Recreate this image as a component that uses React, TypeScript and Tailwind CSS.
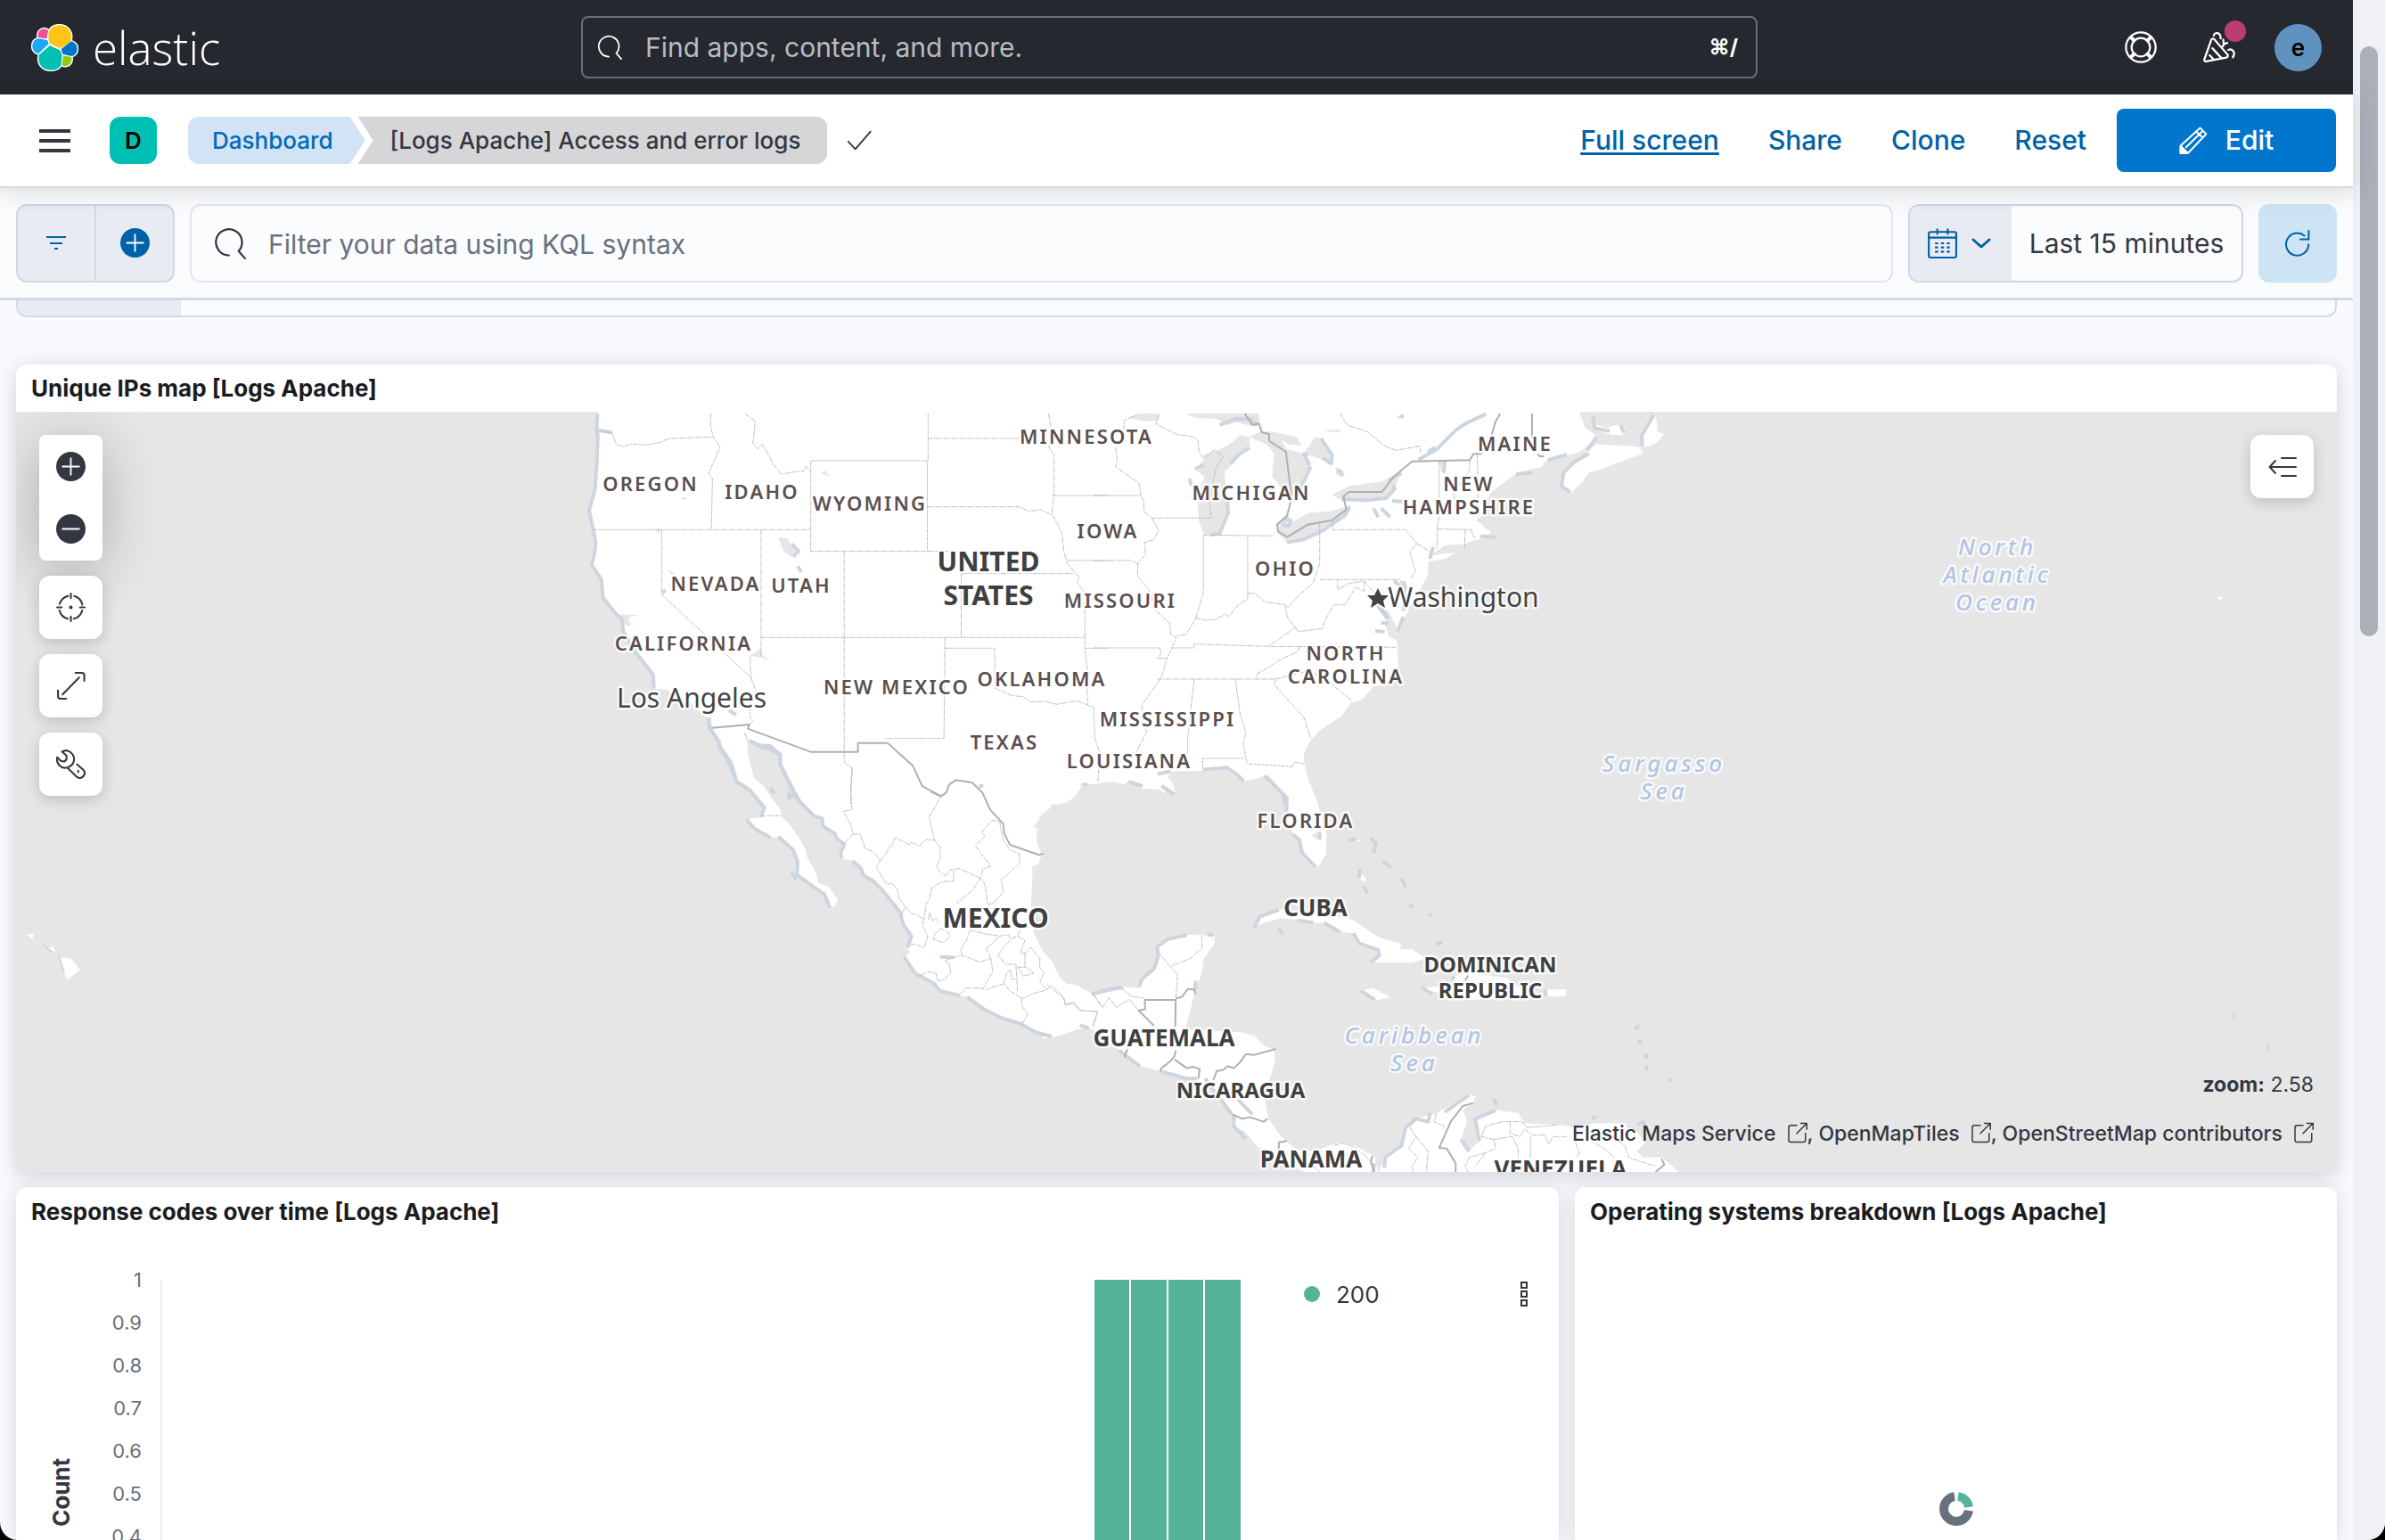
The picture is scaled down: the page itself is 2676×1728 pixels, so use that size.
import React from "react";

type IconProps = { className?: string; children: React.ReactNode; box?: number; width?: number };

function Icon({ className = "size-9", children, box = 16, width = 1 }: IconProps) {
  return (
    <svg
      viewBox={`0 0 ${box} ${box}`}
      className={className}
      fill="none"
      stroke="currentColor"
      strokeWidth={width}
      strokeLinecap="round"
      strokeLinejoin="round"
      aria-hidden="true"
    >
      {children}
    </svg>
  );
}

const SearchIcon = ({ className }: { className: string }) => (
  <Icon className={className}>
    <path d="M7.500 14A6.500 6.500 0 1 1 12.300 11.900L15.500 15.500" />
  </Icon>
);

const PlusCircle = ({ className }: { className: string }) => (
  <Icon className={className}>
    <circle cx="8" cy="8" r="8" fill="currentColor" stroke="none" />
    <path d="M3.500 8h9M8 3.500v9" stroke="#fff" strokeWidth="0.9" />
  </Icon>
);

const MinusCircle = ({ className }: { className: string }) => (
  <Icon className={className}>
    <circle cx="8" cy="8" r="8" fill="currentColor" stroke="none" />
    <path d="M3.500 8h9" stroke="#fff" strokeWidth="0.9" />
  </Icon>
);

const PopoutIcon = () => (
  <Icon className="ml-[5px] inline-block size-6 align-[-3px]">
    <path d="M8 2.500H3.500a1.500 1.500 0 0 0-1.500 1.500v9.500a1.500 1.500 0 0 0 1.500 1.500h9.500a1.500 1.500 0 0 0 1.500-1.500V8.500M11 1h4.500v4.500M15.300 1.200L8 8.500" />
  </Icon>
);

function ElasticLogo() {
  const blobs: [string, string][] = [
    ["#fec514", "M103 85C103 60 120 49 140 49C163 49 180 66 180 90C180 98 178 104 173 109L142 127L107 110C104 102 103 94 103 85Z"],
    ["#f04e98", "M68 85C66 70 78 61 88 61C94 61 100 64 103 68C99 77 98 86 98 92C88 94 76 92 68 90Z"],
    ["#1ba9f5", "M66 94C80 94 92 98 100 100L104 112L70 144C58 144 49 132 49 121C49 107 56 97 66 94Z"],
    ["#00bfb3", "M108 117L143 134L149 150L145 185C136 196 124 200 110 200C88 200 70 184 70 161C70 156 71 152 72 148Z"],
    ["#93c90e", "M153 151C162 153 172 153 181 157C184 173 174 186 160 186C155 186 151 184 148 182Z"],
    ["#0077cc", "M180 103C193 107 200 117 200 128C200 140 193 149 183 153C172 151 160 148 151 146L146 129Z"],
  ];
  return (
    <svg viewBox="45 45 159 159" className="size-[53px]" aria-hidden="true">
      <g fill="#fff" stroke="#fff" strokeWidth="9" strokeLinejoin="round">
        {blobs.map(([c, d]) => <path key={c} d={d} />)}
      </g>
      {blobs.map(([c, d]) => <path key={c} d={d} fill={c} />)}
    </svg>
  );
}

function TopBar() {
  return (
    <header className="flex h-[106px] shrink-0 items-center bg-[#25282f] pr-[35px] pl-[35px] text-white">
      <div className="flex flex-1 items-center gap-4">
        <a href="#home" className="flex items-center gap-4">
          <ElasticLogo />
          <span className="font-['Open_Sans','Noto_Sans',sans-serif] text-[51px] leading-[56px] font-light">elastic</span>
        </a>
      </div>
      <label className="mr-4 flex h-[70px] w-[1320px] items-center rounded-lg border-2 border-[#6b6e75] px-4">
        <SearchIcon className="size-7" />
        <input
          aria-label="Find apps, content, and more."
          placeholder="Find apps, content, and more."
          className="ml-[26px] min-w-0 flex-1 bg-transparent text-[30px] text-white outline-none placeholder:text-[#b9bbc0]"
        />
        <span className="pr-1 text-2xl font-bold">⌘/</span>
      </label>
      <div className="flex flex-1 items-center justify-end gap-11">
        <button aria-label="Help" className="mr-2">
          <Icon className="size-9">
            <circle cx="8" cy="8" r="7.400" />
            <circle cx="8" cy="8" r="4.600" />
            <path d="M3.300 2.700l1.900 1.900M2.700 3.300l1.900 1.900M12.700 2.700l-1.900 1.900M13.300 3.300l-1.900 1.900M3.300 13.300l1.900-1.900M2.700 12.700l1.900-1.900M12.700 13.300l-1.900-1.900M13.300 12.700l-1.900-1.900" />
          </Icon>
        </button>
        <button aria-label="Newsfeed" className="relative">
          <Icon className="size-9">
            <path d="M4.100 4.200L.6 14a.8.8 0 0 0 .9 1.100l10-1.900a1 1 0 0 0 .5-1.700L5.500 4a.9.900 0 0 0-1.400.2zM3.200 12l2.200 2.200M4.600 8.500l4.600 5M5.300 2.200C5.500.3 8.800.4 8.700 3.600M12.600 9.300c2-.9 3.700 1.500 2.200 3.700M10 4.200l.3 2.300 1.700-.7M9.800 7.500l.5-1" />
          </Icon>
          <span className="absolute -top-3 -right-3 size-6 rounded-full bg-[#bd3c74]" />
        </button>
        <button aria-label="Account menu" className="flex size-[53px] items-center justify-center rounded-full bg-[#6092c0] text-[26px] font-semibold text-black">
          e
        </button>
      </div>
    </header>
  );
}

function NavBar() {
  return (
    <nav className="z-20 flex h-[105px] shrink-0 items-center border-b-2 border-[#d3dae6] bg-white pr-[19px] pl-11 shadow-[0_4px_26px_rgba(0,0,0,0.14)]">
      <button aria-label="Toggle primary navigation" className="flex w-[35px] flex-col gap-[7px]">
        <span className="h-1 w-full bg-[#343741]" />
        <span className="h-1 w-full bg-[#343741]" />
        <span className="h-1 w-full bg-[#343741]" />
      </button>
      <button className="ml-11 flex size-[53px] items-center justify-center rounded-xl bg-[#00bfb3] text-[26px] font-semibold text-black">D</button>
      <ol className="ml-[35px] flex h-[53px] text-[26px] font-medium">
        <li className="flex items-center rounded-l-xl bg-[#d2e3f5] pr-9 pl-[27px] text-[#006bb8] [clip-path:polygon(0_0,calc(100%-17px)_0,100%_50%,calc(100%-17px)_100%,0_100%)]">
          <a href="#dashboards">Dashboard</a>
        </li>
        <li className="-ml-2 flex items-center rounded-r-xl bg-[#d6d6d8] pr-[30px] pl-9 text-[#343741] [clip-path:polygon(0_0,100%_0,100%_100%,0_100%,17px_50%)]">
          [Logs Apache] Access and error logs
        </li>
      </ol>
      <Icon className="ml-[21px] size-[30px] text-[#343741]">
        <path d="M1.500 8.500l4.200 4.500L14.800 2.500" />
      </Icon>
      <div className="ml-auto flex items-center text-[30px] font-medium text-[#0061a6]">
        <div className="flex gap-[55px] pr-[34px]">
          <a href="#full-screen" className="underline decoration-3 underline-offset-3">Full screen</a>
          <a href="#share">Share</a>
          <a href="#clone">Clone</a>
          <a href="#reset">Reset</a>
        </div>
        <button className="flex h-[71px] w-[246px] items-center justify-center gap-5 rounded-lg bg-[#0077cc] text-white">
          <Icon className="size-8" width={1}>
            <path d="M11.800.8l3.400 3.400L5 14.900H.8v-4.200L11.800.8zM.8 10.900l4.100 4M13.300 2.400L3.900 11.600M9.400 2.700l3.900 3.600" />
            <path d="M.8 11.500v3.500h3.600z" fill="currentColor" />
          </Icon>
          Edit
        </button>
      </div>
    </nav>
  );
}

function FilterBar() {
  return (
    <section className="z-10 flex h-[126px] shrink-0 items-start gap-[17px] border-b-3 border-[#d3dae6] bg-[#fafbfd] px-[18px] pt-[18px] text-[30px]">
      <div className="flex h-[88px] w-[178px] divide-x-2 divide-[#d0d6e6] overflow-hidden rounded-xl border-2 border-[#d0d6e6] bg-[#e9ebf3] text-[#0061a6]">
        <button aria-label="Saved query menu" className="flex flex-1 items-center justify-center">
          <svg viewBox="0 0 22 16" className="h-4 w-[22px] fill-current" aria-hidden="true">
            <rect width="22" height="2" y="0" />
            <rect width="14" height="2" x="4" y="7" />
            <rect width="4" height="2" x="9" y="13" />
          </svg>
        </button>
        <button aria-label="Add filter" className="flex flex-1 items-center justify-center pb-0.5">
          <PlusCircle className="size-[33px]" />
        </button>
      </div>
      <label className="flex h-[88px] min-w-0 flex-1 items-center rounded-xl border-2 border-[#e0e5f0] bg-[#fbfcfe] px-[25px] text-[#343741]">
        <SearchIcon className="size-9" />
        <input
          aria-label="Filter your data using KQL syntax"
          placeholder="Filter your data using KQL syntax"
          className="ml-[25px] min-w-0 flex-1 bg-transparent pt-0.5 outline-none placeholder:text-[#69707d]"
        />
      </label>
      <div className="flex h-[88px] overflow-hidden rounded-xl border-2 border-[#d0d6e6] bg-[#fbfcfe] text-[#343741]">
        <button aria-label="Date quick select" className="flex w-[114px] items-center justify-center gap-4 bg-[#e9ebf3] pr-1 text-[#0061a6]">
          <Icon className="size-[34px]">
            <rect x="1" y="2" width="14.500" height="13.500" rx="1" />
            <path d="M1 5h14.500M5.500.6v2.400M11 .6v2.400" />
            <path d="M4.300 8h8M4.300 10.200h8M4.300 12.400h8" strokeDasharray="1.600 1.500" strokeLinecap="butt" />
          </Icon>
          <svg viewBox="0 0 22 12" className="h-3 w-[22px]" fill="none" stroke="currentColor" strokeWidth="3" strokeLinecap="round" strokeLinejoin="round" aria-hidden="true">
            <path d="M2 2l9 8 9-8" />
          </svg>
        </button>
        <button className="w-[258px] whitespace-nowrap">Last 15 minutes</button>
      </div>
      <button aria-label="Refresh" className="flex size-[88px] items-center justify-center rounded-xl bg-[#cce4f4] text-[#0061a6]">
        <Icon className="size-8">
          <path d="M14.100 8.600A6.300 6.300 0 1 1 11.800 3.700M14.200 1v4.700H9.500" />
        </Icon>
      </button>
    </section>
  );
}

type Tile = { transform: string; land: string; water?: string; coast: string; state: string; nation: string };

const tiles: Tile[] = [
  {
    transform: "translate(640 450) scale(0.3954 0.3333)",
    land: "M80 0L80 36L85 45L72 60L75 95L78 110L75 200L70 290L50 362L72 470L68 510L58 545L65 560L88 595L92 655L130 712L148 720L145 745L165 790L185 840L235 915L237 962L280 967L300 1000L340 1010L375 1050L390 1060L393 1095L420 1140L425 1165L450 1210L470 1275L510 1305L540 1352L582 1352L575 1340L520 1260L505 1190L500 1130L495 1110L505 1100L512 1138L545 1160L565 1165L595 1185L597 1220L635 1310L655 1352L1372 1352L1405 1330L1440 1295L1445 1280L1475 1285L1530 1275L1620 1280L1620 0Z",
    water: "M590 452L615 455L625 475L640 478L650 500L630 520L605 500ZM310 320L330 318L328 328ZM708 236L725 228L733 246ZM240 425L255 422L252 440ZM275 560L297 575L287 580ZM145 712L195 715L165 722L172 752L150 745ZM510 852L540 825L545 850L570 870L545 858Z",
    coast: "M76 40L75 95L78 110L75 200L70 290L53 362L72 470L68 510L60 545L88 595L92 655L130 712L146 725L150 770L185 840L235 915L237 962M393 1060L396 1095L420 1140L425 1165L450 1210L470 1275L510 1305L540 1350M512 1140L545 1160L565 1165L595 1185L597 1220L635 1310L655 1350M80 93L118 100M628 475L648 500L632 518M645 550L655 570M260 640L270 630M450 1035L470 1050M570 1300L578 1315M620 1310L620 1335",
    state: "M88 95L118 102L130 140L150 148L175 138L210 142L250 135L280 120L405 115L425 148L392 238L403 255L400 425M398 36V85L407 115M495 36L525 62L518 135L530 155L545 140L555 160L575 205L598 240L650 230L665 228L668 213L682 232M682 195H1013V500H682ZM65 427H682M259 427V645L512 925L510 853M541 427V853M541 790H1460M777 502V1210L800 1230L795 1350M1015 36V195M1015 120H1275M1013 350H1275L1300 365L1335 360L1370 380L1395 440L1400 500L1410 540L1445 590L1437 605L1460 640V830L1467 900V1018M1013 500H1080M1109 575H1427M1109 575V790M1063 790L1060 1130H890M1063 826H1204V960L1250 985L1285 990L1310 1008L1345 1005L1380 1015L1435 1003L1485 1025L1488 1130L1503 1180L1497 1275M1357 36L1365 100L1358 150L1372 175V310L1366 375M1368 312H1530M1410 531H1530M1460 826H1530M512 925L527 970L510 1000V1060L518 1070L508 1083M495 1110L500 1130",
    nation: "M395 1095L508 1083L503 1097L682 1175H816V1145H900L972 1222L998 1290L1052 1325",
  },
  {
    transform: "translate(760 800) scale(0.3333 0.3333)",
    land: "M105 0L108 45L140 90L145 110L180 160L200 225L245 255L293 312L280 345L232 352L262 385L315 415L345 410L390 455L405 495L405 540L495 605L515 655L535 640L540 622L510 580L472 565L470 540L435 475L430 450L413 420L380 372L355 348L345 315L320 285L295 245L252 210L238 150L235 90L228 70L243 85L275 103L312 105L348 133L350 170L390 260L400 280L460 340L490 350L495 375L530 400L535 415L565 435L548 465L550 485L590 490L625 520L625 535L660 555L690 590L750 665L760 705L790 745L770 785L785 798L765 815L800 870L865 905L885 930L975 950L1030 990L1090 1020L1155 1040L1210 1070L1270 1085L1350 1058L1380 1050L1420 1075L1510 1140V918L1440 925L1395 942L1345 910L1305 905L1275 860L1265 835L1230 795L1200 735L1190 640L1195 560L1195 510L1215 505L1226 470L1210 430L1210 380L1197 378L1220 350L1217 345L1260 310L1258 295L1272 302L1305 298L1340 275L1360 240L1350 232L1400 230L1460 225L1510 235V0Z",
    coast: "M106 10L108 45L140 90L145 110L180 160L200 225L245 255L293 312L282 345M232 352L262 385L315 415M340 410L390 455L405 495L403 540L495 605L515 652M243 87L275 103L312 105L346 133L346 170L390 260L400 280L460 340L488 350L490 375L530 400L535 415L562 435L550 465L553 485M590 492L620 520L625 540L660 560L690 590L750 665L760 705L788 745L775 785M763 815L800 870L865 905L885 930L950 945M975 950L1030 990L1090 1020L1155 1040L1210 1070L1260 1083M312 245L325 262M372 285L395 265M385 530L400 555M1395 940L1440 927L1500 918M1355 1045L1385 1055M1365 235L1380 235M1015 240L1030 240M885 815L930 817",
    state: "M592 402L555 440M583 250L588 320L558 325L582 365L592 402L615 402L632 450L660 462L683 490L670 515L705 570L722 568L742 590L745 615L768 648L750 680M588 180L583 250M683 490L705 465L712 445L722 440L733 413L780 437L790 430L815 442L835 420L865 422L848 345L887 275M865 422L885 445V485L872 510L890 535L905 542L920 522L950 518L1020 550L1028 520L1055 510L1003 440L1035 410L1025 395L1060 355L1085 360L1095 420L1120 455L1152 468V500L1115 535L1090 555L1098 595L1070 630L1045 640L1035 570L1020 550L995 590L940 635M930 525V560L890 562L855 585L850 620L838 635L830 690M768 648L790 670L805 672L830 690L825 710L843 745L830 785L800 772L785 775M275 340H355M865 740L885 720L905 725L920 745L895 768L862 755ZM845 690L850 665L858 695L870 685L878 700M985 725L975 755L955 790L958 810L920 820L900 830L915 838L920 870L895 893L875 895L870 870L845 865L815 880M985 725L1040 738L1085 745L1060 770L1040 785L1055 820L1020 832L985 820L958 810M1055 820L1062 865L1040 900L1030 925L1028 920L970 920L950 945M1085 745L1115 740L1120 755L1145 745L1155 725M1145 745L1170 760L1155 800L1170 805L1190 783L1220 820L1220 850L1235 870L1220 900L1245 925L1195 940L1160 955L1120 930L1100 905L1040 925M1120 760L1100 780L1080 810L1105 840L1140 840L1145 930M1170 800V850M1145 850L1175 850L1200 870L1165 880ZM1100 905L1108 870L1120 858L1125 890L1140 890M1160 955V980L1180 1010L1158 1045M1245 925L1260 910L1300 950L1305 975L1335 968L1355 995L1415 1000L1400 1050M1400 942L1430 985",
    nation: "M852 258L887 275L905 262L915 235L937 220L992 228L1027 262L1053 320L1097 367L1100 400L1120 438L1217 472L1232 467",
  },
  {
    transform: "translate(1240 450) scale(0.4209 0.3333)",
    land: "M-60 0V1275H80L100 1300L140 1300L160 1315L160 1290L190 1320L180 1280L165 1260L180 1240L250 1240L325 1230L340 1250L370 1275L430 1255L480 1320L487 1352H568L545 1285L530 1220L530 1180L548 1135L570 1105L630 1055L655 1010L685 1000L715 955L740 950L770 925L782 900L778 800L755 785L745 740L760 730L735 690L755 700L775 750L778 768L800 720L815 680L830 650L860 580L862 535L905 525L935 505L900 508L865 515L905 480L960 475L985 462L1040 450L1020 445L1030 435L1010 420L995 395L1010 370L1015 330L1030 300L1060 270L1100 235L1165 215L1170 200L1185 190L1240 175L1265 165L1300 130L1310 110L1280 85L1266 36V0ZM1435 170L1370 200L1320 225L1290 235L1270 270L1240 305L1215 280L1220 240L1255 200L1290 170L1280 165L1310 140L1400 145L1425 150ZM1440 150L1425 130L1430 105L1455 60L1465 36L1470 60L1472 95L1490 105L1470 135ZM1300 70L1340 85L1360 75L1385 80L1380 110L1340 105L1310 90Z",
    water: "M215 36L240 50L300 55L325 75L350 65L390 78L412 70L410 36ZM60 50L90 36H145L140 60L100 62ZM385 115L385 160L355 175L330 220L318 230L325 330L325 370L305 440L265 445L250 400L245 310L265 250L240 225L265 190L262 175L300 160L330 140L360 110ZM385 115L415 95L450 98L510 115L525 145L490 140L470 125L482 155L530 170L560 115L575 120L605 175L605 210L575 190L530 170L548 215L520 285L505 340L490 320L460 270L445 250L450 170L430 140ZM455 430L460 400L490 380L485 415L500 400L545 370L600 365L655 345L640 375L580 430L530 460L485 470ZM605 310L650 280L740 265L790 235L770 290L750 315L700 325L630 328ZM890 195L910 190L905 240L895 230ZM615 215L635 230L630 250L615 240ZM780 45L797 40L795 52L775 52ZM580 92L625 90L630 98L600 98Z",
    coast: "M385 150L355 175L335 205M325 320L328 370L305 440L280 445M240 222L262 210M225 255L230 280M305 75L345 55L395 55M390 60L405 75M548 215L520 290L505 330M575 120L605 175L603 205L580 185M485 470L530 460L580 430L640 378L652 350M630 325L700 328L750 320L772 290L768 275M755 260L790 237M835 192L885 155L935 92L960 70L1015 38M860 165L880 150M905 195L903 235M620 225L635 245M787 50L795 42M540 180L530 172L545 210M1290 170L1250 200L1222 235L1217 280L1240 302M1285 160L1310 115M1463 40L1430 110L1432 145M1300 45L1305 85L1345 95M1375 75L1382 100M1180 192L1230 175M1095 240L1140 235M478 1350L475 1320L430 1258M370 1275L350 1250L325 1228L260 1235M150 1290L185 1318M140 1250L175 1240M62 1275L100 1290M865 525L875 485M795 720L780 768M795 600L800 620L795 700M725 680L755 725M730 690L755 730M720 768L745 770M735 740L755 742M1000 450L1040 452M715 355L728 385M735 355L760 385M765 330L795 332M475 390L495 395L490 415L470 410M770 600L795 625",
    state: "M-30 312H95L103 330V365L125 388H283L278 330L295 220L315 180L290 158L262 190L250 165L247 125L230 112L195 108L135 72L145 40M125 388L143 430L130 460L105 470L108 510L87 540V585L117 630L135 700L172 740L175 780L190 790L165 860L150 925L130 960L97 1020L110 1110L83 1175M50 90V60L85 40M28 150L32 190L28 215L90 270L95 312M-30 531H75L87 545M262 445V640L240 730L230 750L215 780L190 785M240 725L270 732L295 730L320 710L330 720L355 680L380 660V450M262 445L450 448M380 640L400 642L425 670L480 680L487 690L515 650L555 605L572 540V400M572 595H785L795 620M607 395V427H800L832 475L812 500L827 565L815 590M832 475L865 500M480 685L485 720L515 770L580 760L585 735L610 680L640 680L668 620L690 635L690 600L650 608L620 628V597M690 600L720 645L750 720M508 755L470 790L435 818M175 825H237V812L435 820L775 823M-30 825H145L150 845L137 860H165M140 930H455M520 820L510 840L465 865L430 895L405 912V930M455 932L450 948L480 990L530 1060L548 1130M455 930L535 905L575 920L658 1003M347 930L360 1050L375 1110L368 1150L378 1215L500 1225L505 1210L530 1215M260 1230V1197H370M237 930L220 1130V1180M890 195V380L885 425V490M885 425L975 427L985 455M960 427L958 490M992 172L995 400M972 195L970 230L930 300L935 370M627 36L645 75L700 98L745 145L775 160L840 145V170",
    nation: "M372 36L393 75L410 70L418 100L437 105V128L482 165L497 320L485 380L458 410L462 435L485 452L540 410L605 395L643 360L635 315L650 300H738L768 250L818 197L972 193L982 172H1005M1053 36L1040 65L1030 110M1138 36V120M1153 172L1158 180H1170",
  },
  {
    transform: "translate(1180 860) scale(0.4592 0.3333)",
    land: "M450 -15L470 45L520 25L575 100L570 150L590 220L600 230L610 280L650 335L670 290L672 220L650 120L625 30L618 -15ZM-20 640L0 655L15 700L35 725L65 735L100 760L165 735L215 740L215 715L250 675L258 640L255 600L285 575L340 560L398 565L398 590L372 640L365 700L350 745L340 810L325 880L460 888L495 900L515 930L545 950L545 990L530 1060L520 1110L530 1180L560 1240L600 1285L640 1290L700 1260L740 1270L790 1310L800 1390H620L620 1360L540 1310L500 1270L470 1220L455 1215L475 1250L440 1200L445 1165L410 1120L380 1060L330 1045L265 1020L215 1003L170 950L90 870L65 870L0 905L-20 910ZM495 535L510 500L555 475L650 490L700 500L735 510L800 570L855 590L850 610L880 610L915 640L880 655L780 655L800 625L790 610L750 590L735 555L700 550L665 520L640 522L600 510L560 505L520 520ZM980 700L1020 690L1110 705L1150 745L1190 760L1100 775L1020 780L960 760L905 745L930 735L990 735ZM1205 745L1258 745L1255 768L1205 768ZM755 748L785 740L828 770L790 782ZM790 1390L815 1310L855 1270L865 1210L890 1180L940 1160L1000 1115L1020 1098L1035 1105L1030 1125L1005 1150L1015 1190L1000 1250L1020 1290L1045 1255L1035 1180L1080 1150L1140 1160L1155 1195L1240 1200L1280 1210L1330 1195L1405 1195L1400 1205L1430 1225L1450 1260L1430 1290L1445 1310L1490 1310L1560 1390ZM735 240L755 240L745 248ZM752 350L768 370L765 385L750 370Z",
    water: "M635 225L655 212L658 235L650 243Z",
    coast: "M520 25L575 100L573 150M588 222L605 240L612 285L645 333M655 215L655 240M215 735L220 710L250 675L260 635L258 600L285 575L330 562M100 760L165 738M352 715L350 745M495 538L508 500L555 477M665 520L705 552M737 555L752 590L798 612L800 630L780 655M555 540L565 558M600 512L640 520M755 748L790 780M905 740L930 760M980 700L982 712M1207 745V768M727 245L745 238M780 235L792 255L787 285M752 340L752 370M762 397L772 422M875 458L882 468M925 490V500M380 560L395 562M165 950L215 1003M265 1020L330 1045L355 1045M375 1045L440 1165M455 1115L490 1165M445 1170L445 1205L475 1248M813 1345L815 1310L855 1270L865 1210L890 1180L920 1190L925 1160M960 1158L1020 1100M1045 1255L1035 1180L1085 1152M1000 1250L1020 1290M1080 1115L1088 1135M785 1365L788 1330M1425 880L1435 865M1435 915L1438 930M1450 960L1455 978M1453 1000V1018M1508 1045L1512 1055M1320 1180L1330 1172M1430 1200L1445 1190L1450 1210M810 315L830 335M855 372L865 400M940 590L955 588",
    state: "M367 565V605L340 640L293 665M260 620L308 695L303 775M100 760L125 805L140 772L158 805L190 778L212 815M170 740L195 768L228 775M-10 730L30 775L35 800L50 790L68 815L112 820L100 870M885 1185L875 1210L890 1240L872 1280L895 1310L880 1340L885 1365M940 1160L935 1190L960 1205L955 1215M890 1240L920 1290L915 1365M1050 1240L1060 1205L1100 1190H1150L1160 1210L1240 1200M1120 1190L1120 1230L1145 1240L1155 1215L1175 1235L1205 1235L1215 1265L1225 1240L1260 1240M1050 1240L1080 1250L1085 1280L1060 1295L1020 1310L1010 1340L1020 1365M1080 1250L1125 1240L1140 1280L1140 1310M1170 1240L1170 1310M1280 1260L1290 1300L1280 1310M1330 1265L1350 1280L1375 1310M1370 1240L1400 1270L1410 1310L1440 1325L1475 1340M690 1270L710 1262L740 1275L770 1310L790 1340M1060 1295L1035 1340M640 1340L660 1365",
    nation: "M250 867L212 815L228 812V780H303L302 870M303 775L318 770L333 743L348 745L352 760M185 945L178 973M303 950L300 970L287 990L268 1010L265 1020M300 980L330 1010L345 1005L362 1013L358 1045M395 1050L403 1020L420 1015L430 1003L445 1010L460 990L475 962L495 965L548 945M442 1165L465 1180L485 1175L518 1190L528 1180M555 1290V1260L575 1255M1030 1127L1005 1137L975 1190L947 1278L965 1280L987 1330V1365M1475 1360L1497 1335L1490 1315M783 1305L780 1325L790 1365M1010 715L1018 698",
  },
];

const stateLabels: [string, number, number][] = [
  ["OREGON", 730, 549], ["IDAHO", 855, 558], ["WYOMING", 976, 571], ["NEVADA", 803, 661], ["UTAH", 899, 663],
  ["CALIFORNIA", 767, 728], ["NEW MEXICO", 1006, 777], ["OKLAHOMA", 1169, 768], ["TEXAS", 1127, 839],
  ["MINNESOTA", 1219, 496], ["MICHIGAN", 1404, 559], ["MAINE", 1700, 504], ["NEW", 1648, 549], ["HAMPSHIRE", 1648, 575],
  ["IOWA", 1243, 602], ["OHIO", 1442, 644], ["MISSOURI", 1257, 680], ["NORTH", 1510, 739], ["CAROLINA", 1510, 765],
  ["MISSISSIPPI", 1310, 813], ["LOUISIANA", 1267, 860], ["FLORIDA", 1465, 927],
];

const countryLabels: [string, number, number, string][] = [
  ["UNITED", 1109, 639, "text-[30px]"], ["STATES", 1109, 677, "text-[30px]"], ["MEXICO", 1117, 1039, "text-[30px]"],
  ["CUBA", 1476, 1026, "text-[26px]"], ["DOMINICAN", 1672, 1089, "text-2xl"], ["REPUBLIC", 1672, 1118, "text-2xl"],
  ["GUATEMALA", 1306, 1172, "text-[26px]"], ["NICARAGUA", 1392, 1230, "text-2xl"], ["PANAMA", 1471, 1308, "text-[26px]"],
  ["VENEZUELA", 1751, 1319, "text-[26px]"],
];

const waterLabels: [string, number, number][] = [
  ["North", 2241, 621], ["Atlantic", 2241, 652], ["Ocean", 2241, 683], ["Sargasso", 1867, 864], ["Sea", 1867, 895],
  ["Caribbean", 1587, 1169], ["Sea", 1587, 1200],
];

function BaseMap() {
  return (
    <svg viewBox="18 460 2604 853" preserveAspectRatio="xMidYMid slice" className="block w-full bg-[#e6e6e6]" role="img" aria-label="Map of North America">
      <g fill="#fff">
        {tiles.map((t) => <path key={t.transform} d={t.land} transform={t.transform} />)}
        <path d="M68 1072L80 1074L90 1086L76 1097L70 1088ZM52 1062L60 1060L62 1066ZM30 1046L38 1046L36 1052ZM2488 667L2494 669L2490 672Z" />
      </g>
      {tiles.map((t) => (
        <g key={t.transform} transform={t.transform} fill="none">
          {t.water && <path d={t.water} fill="#e6e6e6" />}
          <path d={t.coast} stroke="#cdd5df" strokeWidth="4" vectorEffect="non-scaling-stroke" strokeLinejoin="round" />
          <path d={t.state} stroke="#bdbdbd" strokeWidth="1" strokeDasharray="5 1 2 1" vectorEffect="non-scaling-stroke" />
          <path d={t.nation} stroke="#b0b0b0" strokeWidth="2" vectorEffect="non-scaling-stroke" strokeLinejoin="round" />
        </g>
      ))}
      <path d="M66 1070L72 1090M48 1058L58 1066M2505 1136L2507 1140M2544 1170L2546 1176" stroke="#cdd5df" strokeWidth="2" />
      <g className="font-['Noto_Sans',sans-serif] [paint-order:stroke]" textAnchor="middle" stroke="#ffffff" strokeOpacity="0.8" strokeWidth="5" strokeLinejoin="round">
        {stateLabels.map(([t, x, y]) => (
          <text key={t} x={x} y={y} className="fill-[#5b4f4f] text-[22px] font-semibold tracking-widest">{t}</text>
        ))}
        {countryLabels.map(([t, x, y, size]) => (
          <text key={t} x={x} y={y} className={`fill-[#404040] font-bold ${size}`}>{t}</text>
        ))}
        {waterLabels.map(([t, x, y]) => (
          <text key={t + y} x={x} y={y} className="fill-[#b0c5e3] text-[26px] font-medium tracking-[0.15em] italic">{t}</text>
        ))}
        <g className="fill-[#444] text-[30px]">
          <text x="776" y="792">Los Angeles</text>
          <text x="1642" y="679">Washington</text>
          <path d="M1546 658l4 8h8l-6 6 2 8-8-5-8 5 2-8-6-6h8z" />
        </g>
      </g>
    </svg>
  );
}

const controlClass = "flex h-[71px] w-[71px] items-center justify-center rounded-xl bg-white shadow-[0_4px_16px_rgba(0,0,0,0.18)]";

function MapPanel() {
  return (
    <section className="rounded-t-xl bg-white shadow-[0_4px_24px_rgba(0,0,0,0.16)]">
      <h2 className="px-[17px] text-[26px] leading-[53px] font-bold text-[#1a1c21]">Unique IPs map [Logs Apache]</h2>
      <div className="relative overflow-hidden text-[#343741]">
        <BaseMap />
        <div className="absolute top-[26px] left-[26px] flex flex-col gap-[17px]">
          <div className="flex h-[141px] w-[71px] flex-col items-center justify-around rounded-lg bg-white shadow-[0_10px_60px_rgba(0,0,0,0.25)]">
            <button aria-label="Zoom in"><PlusCircle className="size-[33px]" /></button>
            <button aria-label="Zoom out"><MinusCircle className="size-[33px]" /></button>
          </div>
          <button aria-label="Fit to data bounds" className={controlClass}>
            <Icon className="size-[33px]">
              <circle cx="8" cy="8" r="6.400" strokeDasharray="6.650 3.400" strokeDashoffset="-1.700" />
              <path d="M8 .5v2.500M8 13v2.500M.5 8H3M13 8h2.500" />
              <circle cx="8" cy="8" r="0.500" fill="currentColor" />
            </Icon>
          </button>
          <button aria-label="Expand" className={controlClass}>
            <Icon className="size-[33px]">
              <path d="M10.500 1H14a1.300 1.300 0 0 1 1.300 1.300V5.300M1 10.500v3.200A1.300 1.300 0 0 0 2.300 15H5.500M12.500 3.500L3.500 12.700" />
            </Icon>
          </button>
          <button aria-label="Tools" className={controlClass}>
            <Icon className="size-[33px]">
              <path d="M3.200 1.200l2.400 2.100v2.200l-1.300 1.100-1.800-.4L.6 4.200C-.3 7.500 2.700 10.800 6 9.800l5.400 5.200c2.400 1.600 5.200-1.200 3.600-3.700l-3.600-3.200M6.800 9.500C9.400 8.600 10.500 5.500 9.200 3 7.800.6 5.200-.1 3.200 1.200M12 11.500v.8" />
            </Icon>
          </button>
        </div>
        <button aria-label="Expand layers panel" className={`${controlClass} absolute top-[26px] right-[26px]`}>
          <Icon className="size-8">
            <path d="M7.500 3h8M1 8h14.500M7.500 13h8M4 4.500L.8 8 4 11.500" />
          </Icon>
        </button>
        <div className="absolute right-[26px] bottom-6 text-right text-[23px] leading-[38px]">
          <p className="pb-[17px]"><strong className="font-bold">zoom:</strong> 2.58</p>
          <p className="font-medium">
            <a href="#ems">Elastic Maps Service <PopoutIcon /></a>, <a href="#omt">OpenMapTiles <PopoutIcon /></a>,{" "}
            <a href="#osm">OpenStreetMap contributors <PopoutIcon /></a>
          </p>
        </div>
      </div>
    </section>
  );
}

const ticks = ["1", "0.9", "0.8", "0.7", "0.6", "0.5", "0.4"];

function ResponsePanel() {
  return (
    <section className="flex w-[1731px] flex-col overflow-hidden rounded-t-xl bg-white shadow-[0_4px_24px_rgba(0,0,0,0.14)]">
      <h2 className="px-[17px] text-[26px] leading-[56px] font-bold text-[#1a1c21]">Response codes over time [Logs Apache]</h2>
      <div className="flex min-h-0 flex-1 pt-6">
        <div className="flex w-[102px] justify-center pt-[221px]">
          <span className="h-20 rotate-180 text-[26px] leading-8 font-bold text-[#343741] [writing-mode:vertical-rl]">Count</span>
        </div>
        <ol className="w-[39px] text-right text-[22px] leading-[48px] text-[#69707d]">
          {ticks.map((t) => <li key={t}>{t}</li>)}
        </ol>
        <div className="mt-6 ml-[21px] flex flex-1 justify-end gap-0.5 border-l-2 border-[#eef0f4]">
          <span className="w-[39px] bg-[#54b399]" />
          <span className="w-10 bg-[#54b399]" />
          <span className="w-[39px] bg-[#54b399]" />
          <span className="w-10 bg-[#54b399]" />
        </div>
        <div className="mt-[22px] flex h-9 w-[357px] items-center pr-[35px] pl-[71px] text-[26px] text-[#343741]">
          <span className="size-[18px] rounded-full bg-[#54b399]" />
          <span className="ml-[18px] flex-1">200</span>
          <button aria-label="Legend options" className="flex flex-col gap-0.5">
            <span className="size-2 border-2 border-[#343741]" />
            <span className="size-2 border-2 border-[#343741]" />
            <span className="size-2 border-2 border-[#343741]" />
          </button>
        </div>
      </div>
    </section>
  );
}

function SystemsPanel() {
  return (
    <section className="flex min-w-0 flex-1 flex-col rounded-t-xl bg-white shadow-[0_4px_24px_rgba(0,0,0,0.14)]">
      <h2 className="px-[17px] text-[26px] leading-[56px] font-bold text-[#1a1c21]">Operating systems breakdown [Logs Apache]</h2>
      <div className="flex flex-1 items-end justify-center pb-4">
        <svg viewBox="0 0 38 38" className="size-[38px]" fill="none" strokeWidth="10" aria-hidden="true">
          <path d="M17 5.100A14 14 0 1 0 32.900 21" stroke="#69707d" />
          <path d="M21 5.100A14 14 0 0 1 32.900 17" stroke="#54b399" />
        </svg>
      </div>
    </section>
  );
}

export default function App() {
  return (
    <div className="h-screen overflow-hidden bg-black font-['Inter',sans-serif]">
      <div className="flex h-full overflow-hidden rounded-b-[20px] bg-[#f8faff]">
        <div className="flex min-w-0 flex-1 flex-col">
          <TopBar />
          <NavBar />
          <FilterBar />
          <main className="flex min-h-0 flex-1 flex-col px-[18px]">
            <div className="mb-[53px] h-[19px] shrink-0 overflow-hidden rounded-b-xl border-x-2 border-b-2 border-[#d3dae6] bg-[#fbfcfe]">
              <div className="h-full w-[183px] bg-[#e9ebf3]" />
            </div>
            <MapPanel />
            <div className="mt-[17px] flex min-h-0 flex-1 gap-[18px]">
              <ResponsePanel />
              <SystemsPanel />
            </div>
          </main>
        </div>
        <aside className="w-9 shrink-0 bg-[#f0f1f6] px-2 pt-[52px]">
          <div className="h-[662px] rounded-full bg-[#abafb7]" />
        </aside>
      </div>
    </div>
  );
}
